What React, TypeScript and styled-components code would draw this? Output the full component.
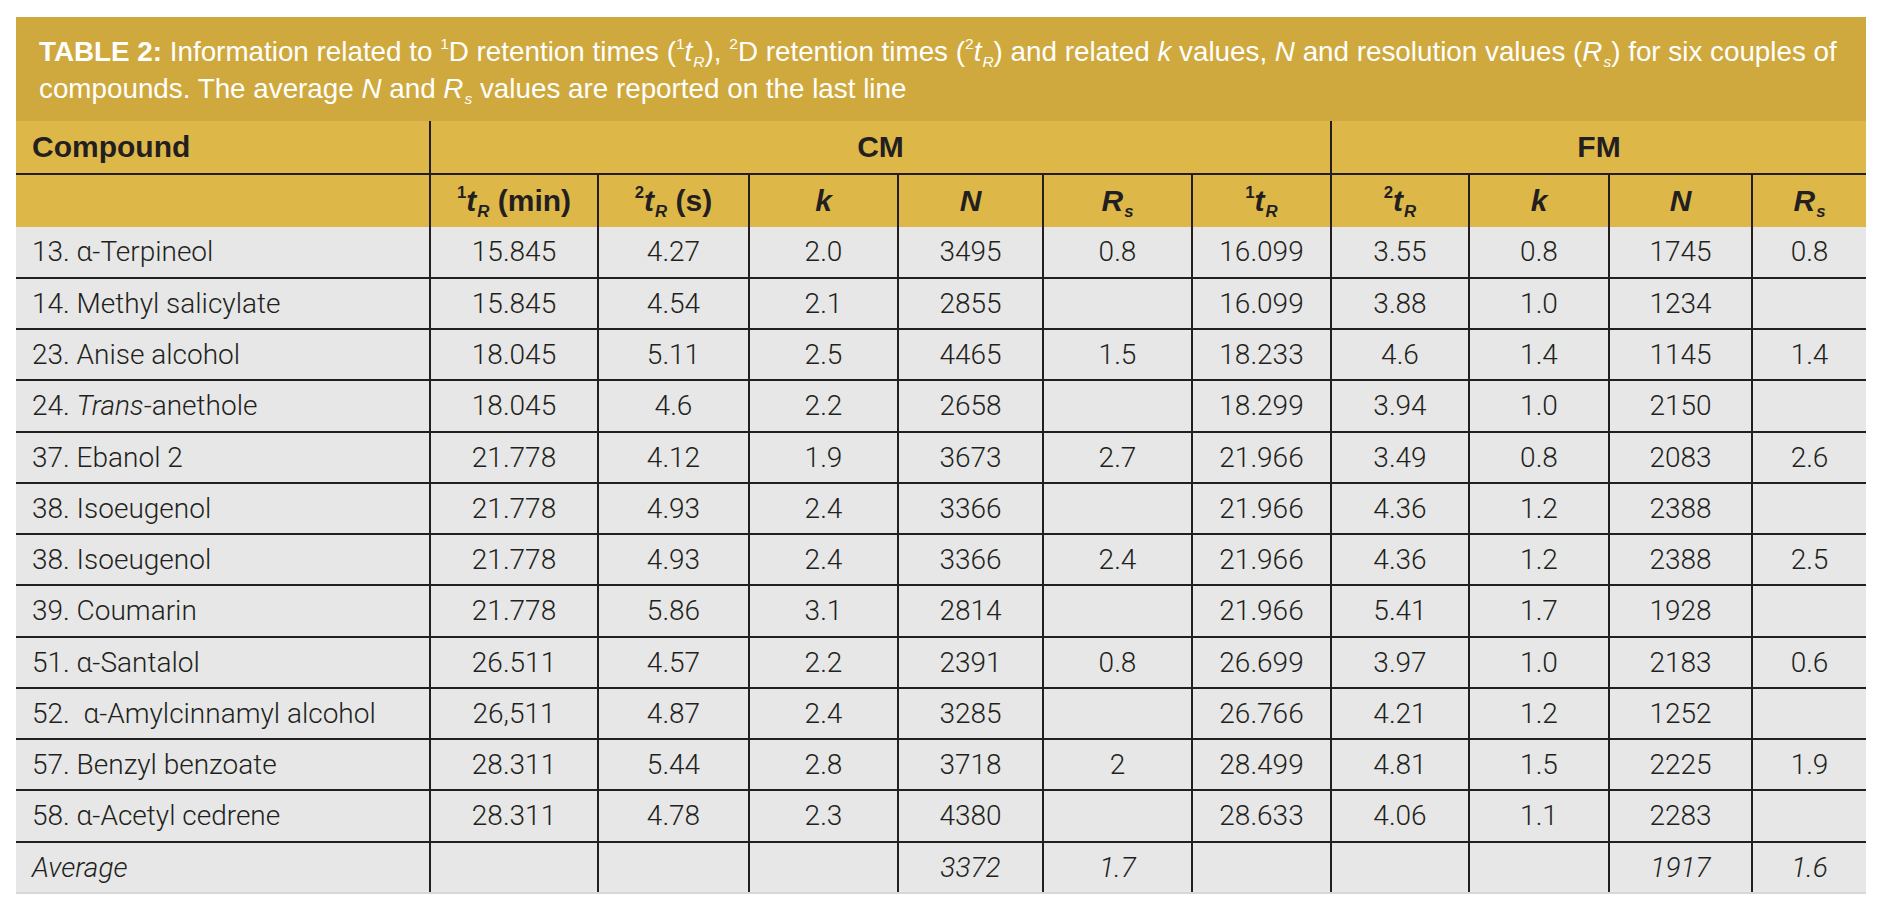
import React from "react";
import styled, { createGlobalStyle } from "styled-components";

const GlobalStyle = createGlobalStyle`
  html, body { margin: 0; padding: 0; background: #ffffff; }
  body { font-family: "Liberation Sans", Arial, sans-serif; }
`;

const INK = "#231f20";

const Page = styled.div`
  padding: 17px 16px 0 16px;
  width: 1882px;
  box-sizing: border-box;
`;

const Table = styled.table`
  width: 1850px;
  border-collapse: collapse;
  table-layout: fixed;
  color: ${INK};
`;

const Caption = styled.caption`
  background: #cfa93d;
  color: #ffffff;
  text-align: left;
  font-family: "Liberation Sans", Arial, sans-serif;
  font-size: 27.8px;
  line-height: 37px;
  padding: 16px 20px 14px 23px;
  white-space: nowrap;
`;

const Strong = styled.strong`
  font-weight: 700;
`;

const Em = styled.em`
  font-style: italic;
`;

const Sup = styled.sup`
  font-size: 0.56em;
  line-height: 0;
  vertical-align: 0.8em;
`;

const Sub = styled.sub`
  font-size: 0.56em;
  line-height: 0;
  vertical-align: -0.36em;
  margin-left: 1px;
`;

const HeadRow = styled.tr<{ $height: number }>`
  background: #ddb849;
  height: ${(p) => p.$height}px;
`;

const HeadCell = styled.th<{ $align?: "left" | "center"; $rule?: boolean }>`
  font-family: "Liberation Sans", Arial, sans-serif;
  font-weight: 700;
  font-size: 30px;
  line-height: 34px;
  padding: 0 ${(p) => (p.$align === "left" ? "16px" : "0")};
  text-align: ${(p) => p.$align ?? "center"};
  vertical-align: middle;
  white-space: nowrap;
  border-bottom: ${(p) => (p.$rule ? `2px solid ${INK}` : "none")};
  &:not(:first-child) {
    border-left: 2px solid ${INK};
  }
`;

const BodyRow = styled.tr`
  background: #e6e7e6;
  height: 51px;
  &:nth-child(4n) {
    height: 52px;
  }
  &:not(:last-child) > td {
    border-bottom: 2px solid ${INK};
  }
  &:last-child > td {
    border-bottom: 2px solid #d6d7d6;
  }
`;

const Cell = styled.td<{ $align?: "left" | "center"; $italic?: boolean }>`
  font-family: "Roboto", "Liberation Sans", Arial, sans-serif;
  font-weight: 300;
  font-size: 28px;
  line-height: 32px;
  padding: 0 ${(p) => (p.$align === "left" ? "16px" : "0")};
  text-align: ${(p) => p.$align ?? "center"};
  font-style: ${(p) => (p.$italic ? "italic" : "normal")};
  vertical-align: middle;
  white-space: pre;
  &:not(:first-child) {
    border-left: 2px solid ${INK};
  }
`;

const widths = [414, 168, 151, 149, 145, 149, 139, 138, 140, 143, 114];

const TR = ({ n }: { n: 1 | 2 }) => (
  <>
    <Sup>{n}</Sup>
    <Em>t</Em>
    <Sub>
      <Em>R</Em>
    </Sub>
  </>
);

const Rs = () => (
  <>
    <Em>R</Em>
    <Sub>
      <Em>s</Em>
    </Sub>
  </>
);

type Row = {
  name: React.ReactNode;
  values: string[];
  italic?: boolean;
};

const rows: Row[] = [
  { name: "13. \u03b1-Terpineol", values: ["15.845", "4.27", "2.0", "3495", "0.8", "16.099", "3.55", "0.8", "1745", "0.8"] },
  { name: "14. Methyl salicylate", values: ["15.845", "4.54", "2.1", "2855", "", "16.099", "3.88", "1.0", "1234", ""] },
  { name: "23. Anise alcohol", values: ["18.045", "5.11", "2.5", "4465", "1.5", "18.233", "4.6", "1.4", "1145", "1.4"] },
  {
    name: (
      <>
        24. <Em>Trans</Em>-anethole
      </>
    ),
    values: ["18.045", "4.6", "2.2", "2658", "", "18.299", "3.94", "1.0", "2150", ""],
  },
  { name: "37. Ebanol 2", values: ["21.778", "4.12", "1.9", "3673", "2.7", "21.966", "3.49", "0.8", "2083", "2.6"] },
  { name: "38. Isoeugenol", values: ["21.778", "4.93", "2.4", "3366", "", "21.966", "4.36", "1.2", "2388", ""] },
  { name: "38. Isoeugenol", values: ["21.778", "4.93", "2.4", "3366", "2.4", "21.966", "4.36", "1.2", "2388", "2.5"] },
  { name: "39. Coumarin", values: ["21.778", "5.86", "3.1", "2814", "", "21.966", "5.41", "1.7", "1928", ""] },
  { name: "51. \u03b1-Santalol", values: ["26.511", "4.57", "2.2", "2391", "0.8", "26.699", "3.97", "1.0", "2183", "0.6"] },
  { name: "52.  \u03b1-Amylcinnamyl alcohol", values: ["26,511", "4.87", "2.4", "3285", "", "26.766", "4.21", "1.2", "1252", ""] },
  { name: "57. Benzyl benzoate", values: ["28.311", "5.44", "2.8", "3718", "2", "28.499", "4.81", "1.5", "2225", "1.9"] },
  { name: "58. \u03b1-Acetyl cedrene", values: ["28.311", "4.78", "2.3", "4380", "", "28.633", "4.06", "1.1", "2283", ""] },
  { name: "Average", values: ["", "", "", "3372", "1.7", "", "", "", "1917", "1.6"], italic: true },
];

export default function App() {
  return (
    <Page>
      <GlobalStyle />
      <Table>
        <Caption>
          <Strong>TABLE 2:</Strong> Information related to <Sup>1</Sup>D retention times (<Sup>1</Sup>
          <Em>t</Em>
          <Sub>
            <Em>R</Em>
          </Sub>
          ), <Sup>2</Sup>D retention times (<Sup>2</Sup>
          <Em>t</Em>
          <Sub>
            <Em>R</Em>
          </Sub>
          ) and related <Em>k</Em> values, <Em>N</Em> and resolution values (<Rs />) for six couples of
          <br />
          compounds. The average <Em>N</Em> and <Rs /> values are reported on the last line
        </Caption>
        <colgroup>
          {widths.map((w, i) => (
            <col key={i} style={{ width: w }} />
          ))}
        </colgroup>
        <thead>
          <HeadRow $height={53}>
            <HeadCell $align="left" $rule>
              Compound
            </HeadCell>
            <HeadCell colSpan={6} $rule>
              CM
            </HeadCell>
            <HeadCell colSpan={4} $rule>
              FM
            </HeadCell>
          </HeadRow>
          <HeadRow $height={53}>
            <HeadCell />
            <HeadCell>
              <TR n={1} /> (min)
            </HeadCell>
            <HeadCell>
              <TR n={2} /> (s)
            </HeadCell>
            <HeadCell>
              <Em>k</Em>
            </HeadCell>
            <HeadCell>
              <Em>N</Em>
            </HeadCell>
            <HeadCell>
              <Rs />
            </HeadCell>
            <HeadCell>
              <TR n={1} />
            </HeadCell>
            <HeadCell>
              <TR n={2} />
            </HeadCell>
            <HeadCell>
              <Em>k</Em>
            </HeadCell>
            <HeadCell>
              <Em>N</Em>
            </HeadCell>
            <HeadCell>
              <Rs />
            </HeadCell>
          </HeadRow>
        </thead>
        <tbody>
          {rows.map((r, i) => (
            <BodyRow key={i}>
              <Cell $align="left" $italic={r.italic}>
                {r.name}
              </Cell>
              {r.values.map((v, j) => (
                <Cell key={j} $italic={r.italic}>
                  {v}
                </Cell>
              ))}
            </BodyRow>
          ))}
        </tbody>
      </Table>
    </Page>
  );
}
